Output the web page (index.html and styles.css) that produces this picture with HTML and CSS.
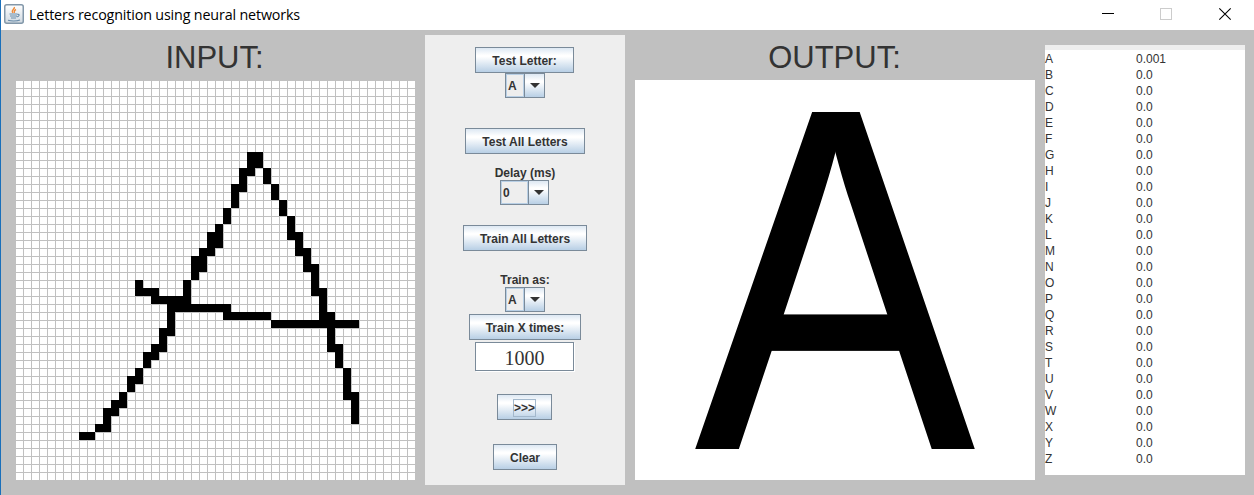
FILE: index.html
```
<!DOCTYPE html>
<html lang="en">
<head>
<meta charset="utf-8">
<title>Letters recognition using neural networks</title>
<link rel="stylesheet" href="styles.css">
</head>
<body>
<div class="window">
  <header class="titlebar">
    <svg class="app-icon" width="20" height="20" viewBox="0 0 20 20">
      <defs><linearGradient id="ic" x1="0" y1="0" x2="0" y2="1"><stop offset="0" stop-color="#fff"/><stop offset="1" stop-color="#cfd8e0"/></linearGradient></defs>
      <rect x=".75" y=".75" width="18.5" height="18.5" rx="2" fill="url(#ic)" stroke="#8297a9" stroke-width="1.5"/>
      <path d="M10.3 3c1 2-3.600 3-1.500 5.800M12 5.500c-2.500 1-1.500 2.200-1.700 3.500" fill="none" stroke="#ee8b3a" stroke-width="1.400"/>
      <path d="M5.500 10h8M6 12h7M7 14h5M13.500 10.500c2.500-.6 2 2-.8 2.500M4 16.300c3 .8 9 .8 12-.4" fill="none" stroke="#6a8dab" stroke-width="1.100"/>
    </svg>
    <h1 class="title">Letters recognition using neural networks</h1>
    <svg class="controls" width="130" height="30" viewBox="0 0 130 30" fill="none" shape-rendering="crispEdges">
      <path d="M0 13.500h12" stroke="#000"/>
      <rect x="58.500" y="8.500" width="11" height="11" stroke="#ccc"/>
      <path d="M117.300 8.300l11.400 11.400M128.700 8.300l-11.400 11.400" stroke="#000" stroke-width="1.100" shape-rendering="auto"/>
    </svg>
  </header>
  <main class="content">
    <section class="board">
      <h2 class="heading">INPUT:</h2>
      <svg class="grid" width="400" height="400" viewBox="0 0 50 50" shape-rendering="crispEdges">
        <defs><pattern id="cell" width="1" height="1" patternUnits="userSpaceOnUse"><rect width="1" height="1" fill="#c0c0c0"/><rect x=".125" y=".125" width=".875" height=".875" fill="#fff"/></pattern></defs>
        <rect width="50" height="50" fill="url(#cell)"/>
        <path d="M29 9h2v2h-2zM28 11h2v1h-2zM28 12h1v1h-1zM27 13h2v1h-2zM27 14h1v2h-1zM26 16h1v2h-1zM25 18h1v1h-1zM24 19h2v2h-2zM23 21h2v1h-2zM22 22h2v2h-2zM22 24h1v1h-1zM21 25h1v2h-1z
          M25 18h1v3h-1zM31 11h1v2h-1zM32 13h1v2h-1zM33 15h1v2h-1zM34 17h1v3h-1zM35 19h1v3h-1zM36 21h1v3h-1zM37 23h1v4h-1zM38 26h1v4h-1zM39 29h1v5h-1zM40 33h1v3h-1zM41 36h1v4h-1zM42 39h1v4h-1z
          M15 25h1v2h-1zM16 26h1v1h-1zM17 27h5v1h-5zM19 28h8v1h-8zM26 29h6v1h-6zM32 30h11v1h-11zM15 26h3v1h-3z
          M19 29h1v3h-1zM18 31h1v3h-1zM17 33h1v2h-1zM16 34h1v2h-1zM15 36h1v2h-1zM14 37h1v2h-1zM13 39h1v2h-1zM12 40h1v2h-1zM11 41h1v3h-1zM10 43h1v1h-1zM8 44h2v1h-2z" fill="#000"/>
      </svg>
    </section>

    <section class="panel">
      <button class="btn w99 odd">Test Letter:</button>
      <div class="combo"><span class="value">A</span><span class="drop"><svg width="10" height="5"><path d="M0 0h10L5 5z" fill="#333"/></svg></span></div>
      <button class="btn w120 gap30">Test All Letters</button>
      <label class="label gap12">Delay (ms)</label>
      <div class="combo wide odd"><span class="value">0</span><span class="drop"><svg width="10" height="5"><path d="M0 0h10L5 5z" fill="#333"/></svg></span></div>
      <button class="btn w124 gap20">Train All Letters</button>
      <label class="label gap22">Train as:</label>
      <div class="combo"><span class="value">A</span><span class="drop"><svg width="10" height="5"><path d="M0 0h10L5 5z" fill="#333"/></svg></span></div>
      <button class="btn w112 gap2">Train X times:</button>
      <div class="field odd">1000</div>
      <button class="btn w55 gap23 odd"><span class="focus">&gt;&gt;&gt;</span></button>
      <button class="btn w64 gap24">Clear</button>
    </section>

    <section class="board">
      <h2 class="heading">OUTPUT:</h2>
      <div class="output"><span class="glyph">A</span></div>
    </section>

    <section class="results">
      <dl class="scores">
        <dt>A</dt><dd>0.001</dd><dt>B</dt><dd>0.0</dd><dt>C</dt><dd>0.0</dd><dt>D</dt><dd>0.0</dd><dt>E</dt><dd>0.0</dd><dt>F</dt><dd>0.0</dd><dt>G</dt><dd>0.0</dd><dt>H</dt><dd>0.0</dd><dt>I</dt><dd>0.0</dd><dt>J</dt><dd>0.0</dd><dt>K</dt><dd>0.0</dd><dt>L</dt><dd>0.0</dd><dt>M</dt><dd>0.0</dd><dt>N</dt><dd>0.0</dd><dt>O</dt><dd>0.0</dd><dt>P</dt><dd>0.0</dd><dt>Q</dt><dd>0.0</dd><dt>R</dt><dd>0.0</dd><dt>S</dt><dd>0.0</dd><dt>T</dt><dd>0.0</dd><dt>U</dt><dd>0.0</dd><dt>V</dt><dd>0.0</dd><dt>W</dt><dd>0.0</dd><dt>X</dt><dd>0.0</dd><dt>Y</dt><dd>0.0</dd><dt>Z</dt><dd>0.0</dd>
      </dl>
    </section>
  </main>
</div>
</body>
</html>
```
FILE: styles.css
```
* { box-sizing: border-box; }
body { margin: 0; font-family: "Liberation Sans", Arial, sans-serif; color: #333; }
.window { width: 1254px; height: 495px; background: #c0c0c0; border-left: 1px solid #1a6fba; overflow: hidden; }
.titlebar { display: flex; align-items: center; height: 30px; padding-left: 3px; background: #fff; }
.app-icon { margin-top: -3px; }
.title { margin: 0 auto 0 5px; font: 400 14.3px/30px "Open Sans", "Noto Sans", sans-serif; letter-spacing: -.15px; color: #000; white-space: nowrap; }
.controls { margin-right: 22px; }
.content { display: flex; gap: 10px; padding: 5px 9px 0 14px; align-items: flex-start; }
.board { width: 400px; }
.heading { margin: 0; height: 45px; padding-right: 1px; font-size: 31px; line-height: 45px; font-weight: 400; text-align: center; }
.grid { display: block; }
.output { height: 400px; background: #fff; overflow: hidden; text-align: center; }
.glyph { display: block; font-size: 490px; line-height: 398px; color: #000; transform: scaleX(.85); text-shadow: -2px 0 #000, 2px 0 #000; }

.panel { display: flex; flex-direction: column; align-items: center; width: 200px; height: 450px; padding-top: 12px; background: #eee; }
.btn { height: 26px; padding: 2px 0 0; border: 1px solid #7a8a99; background: linear-gradient(#dde8f3 0, #fff 30%, #fff 36%, #b8cfe5 100%); color: #333; font: 700 12px/22px "Liberation Sans", Arial, sans-serif; white-space: nowrap; }
.panel .odd { margin-right: 1px; }
.w99 { width: 99px; }
.w120 { width: 120px; }
.w124 { width: 124px; }
.w112 { width: 112px; }
.w55 { width: 55px; padding-top: 0; }
.w64 { width: 64px; }
.gap2 { margin-top: 2px; }
.gap12 { margin-top: 12px; }
.gap20 { margin-top: 20px; }
.gap22 { margin-top: 22px; }
.gap23 { margin-top: 23px; }
.gap24 { margin-top: 24px; }
.gap30 { margin-top: 30px; }
.label { height: 14px; font: 700 12px/14px "Liberation Sans", Arial, sans-serif; }
.combo { display: flex; width: 40px; height: 25px; border: 1px solid #7a8a99; font: 700 12px/23px "Liberation Sans", Arial, sans-serif; }
.combo.wide { width: 49px; }
.value { flex: 1; padding-left: 1px; border: 1px solid #b8cfe5; }
.drop { display: flex; align-items: center; justify-content: center; width: 20px; border-left: 1px solid #7a8a99; background: linear-gradient(#dde8f3 0, #fff 30%, #fff 36%, #b8cfe5 100%); }
.field { width: 99px; height: 29px; margin-top: 2px; border: 1px solid #7a8a99; box-shadow: 1px 1px #fff; background: #fff; text-align: center; font: 20px/31px "Liberation Serif", serif; }
.focus { display: inline-block; width: 23px; height: 18px; border: 1px solid #a3b8cc; line-height: 16px; vertical-align: middle; }

.results { width: 200px; height: 430px; margin-top: 10px; border-top: 5px solid #eee; background: #fff; }
.scores { display: grid; grid-template-columns: 91px 1fr; grid-auto-rows: 16px; margin: 0; padding-top: 1px; font-size: 12px; line-height: 17px; }
.scores dd { margin: 0; }
```
